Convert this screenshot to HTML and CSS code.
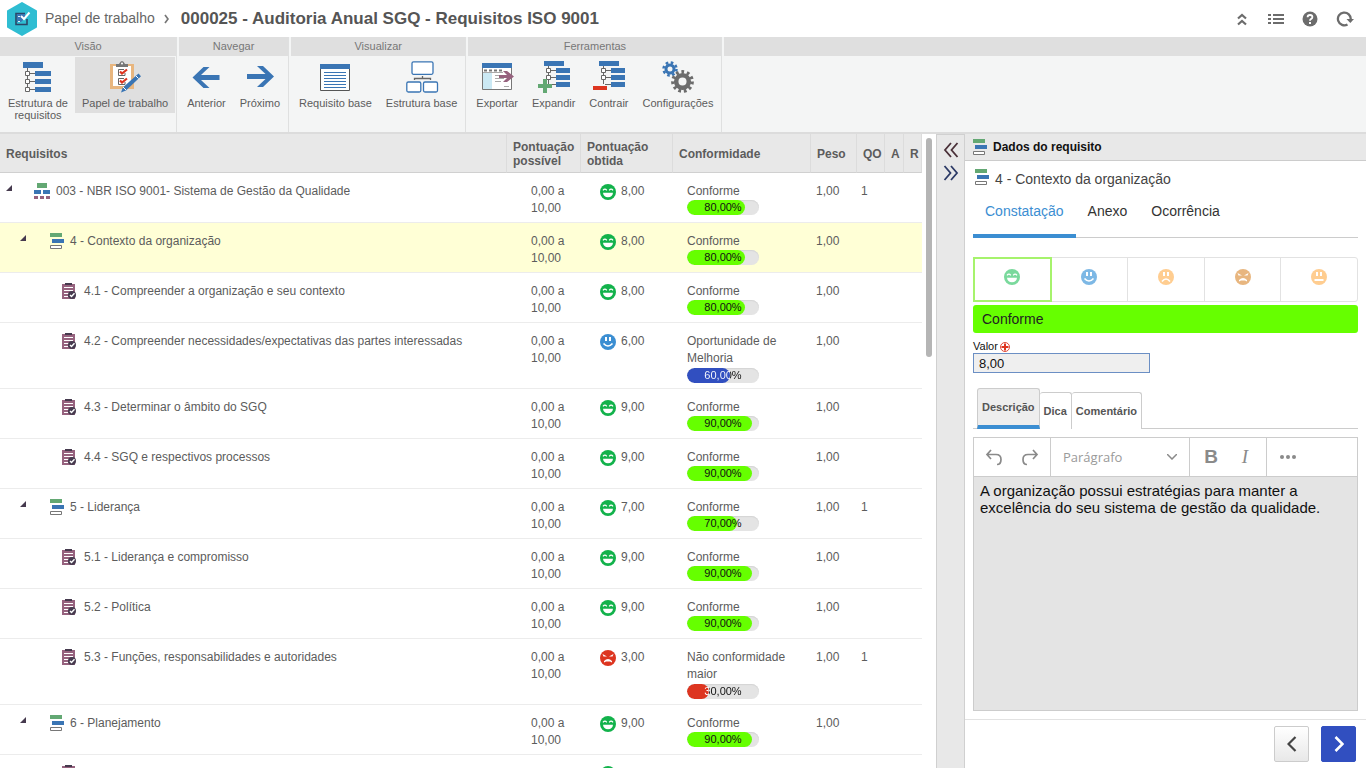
FILE: index.html
```html
<!DOCTYPE html>
<html lang="pt-BR">
<head>
<meta charset="utf-8">
<title>Papel de trabalho</title>
<link rel="stylesheet" href="styles.css">
</head>
<body>
<svg class="sprite" aria-hidden="true">
  <symbol id="happy" viewBox="0 0 16 16"><circle cx="8" cy="8" r="8" fill="currentColor"/><path d="M3 6.400q1.900-2.400 3.800 0M9.200 6.400q1.900-2.400 3.800 0" fill="none" stroke="#fff" stroke-width="1.300"/><path d="M3 8.800h10q-.5 4.400-5 4.400t-5-4.400z" fill="#fff"/></symbol>
  <symbol id="smile" viewBox="0 0 16 16"><circle cx="8" cy="8" r="8" fill="currentColor"/><path d="M6 3v4M10 3v4" stroke="#fff" stroke-width="2"/><path d="M3.500 9.500q4.500 5 9 0" fill="none" stroke="#fff" stroke-width="1.700"/></symbol>
  <symbol id="sad" viewBox="0 0 16 16"><circle cx="8" cy="8" r="8" fill="currentColor"/><path d="M6 3v4M10 3v4" stroke="#fff" stroke-width="2"/><path d="M4 12.500q4-5 8 0" fill="none" stroke="#fff" stroke-width="1.600"/></symbol>
  <symbol id="angry" viewBox="0 0 16 16"><circle cx="8" cy="8" r="8" fill="currentColor"/><path d="M2.500 4l4.500 2.500H3.500zM13.500 4L9 6.500h3.500z" fill="#fff"/><path d="M4 12.500V11q4-3.800 8 0v1.500l-2-1H6z" fill="#fff"/></symbol>
  <symbol id="neutral" viewBox="0 0 16 16"><circle cx="8" cy="8" r="8" fill="currentColor"/><path d="M6 3v4M10 3v4" stroke="#fff" stroke-width="2"/><path d="M3.500 10h9v2h-9z" fill="#fff"/></symbol>
  <symbol id="root" viewBox="0 0 16 16"><path d="M3 0h10v5H3z" fill="#63a873"/><path d="M0 7h7v4H0zM9 7h7v4H9z" fill="#3a75b4"/><path d="M0 13h4v3H0zM6 13h4v3H6zM12 13h4v3h-4z" fill="#96627e"/></symbol>
  <symbol id="section" viewBox="0 0 14 16"><path d="M0 0h12v4H0z" fill="#63a873"/><path d="M2 6h12v4H2z" fill="#3a75b4"/><path d="M.5 12.500h11v3H.5z" fill="#fff" stroke="#777"/></symbol>
  <symbol id="clip" viewBox="0 0 14 16"><path d="M0 1h13v15H0z" fill="#96627e"/><path d="M3 0h7v2H3z" fill="#463a4e"/><path d="M2 4.500h9M2 7.500h9M2 10.500h5M2 13.500h4" stroke="#fff"/><circle cx="10" cy="12" r="4" fill="#463a4e"/><path d="M8 12l1.500 1.500 3-3.200" fill="none" stroke="#fff" stroke-width="1.400"/></symbol>
  <symbol id="caret" viewBox="0 0 6 6"><path d="M6 0v6H0z" fill="#463a4e"/></symbol>
  <symbol id="branch" viewBox="0 0 32 32"><path d="M6 0h20v5H6z" fill="#3a75b4"/><path d="M10.500 5v18M13 9.500h5M13 16.500h5M12 23.500h6" stroke="#666" fill="none"/><path d="M18 7h14v5H18zM18 14h14v5H18zM18 21h14v5H18z" fill="#3a75b4"/><path d="M8.500 7.500h4v4h-4zM8.500 14.500h4v4h-4z" fill="#fff" stroke="#666"/></symbol>
</svg>

<header class="topbar">
  <svg class="logo" viewBox="0 0 30 34"><path d="M15 1l14 8v16l-14 8L1 25V9z" fill="#2fbdd2" stroke="#2fbdd2" stroke-width="2" stroke-linejoin="round"/><path d="M18 11.500H9v11h11V17" fill="none" stroke="#2b4668" stroke-width="1.600"/><path d="M10 12h8v4l-4 4h-4z" fill="#3a75b4"/><path d="M11 14.500h2M11 19.500h2" stroke="#dff6fa"/><path d="M14 14l3 3 5.500-6.500" fill="none" stroke="#fff" stroke-width="2"/></svg>
  <a class="crumb" href="#">Papel de trabalho</a>
  <svg class="chev" viewBox="0 0 5 10"><path d="M1 1l3 4-3 4" fill="none" stroke="#777" stroke-width="1.700"/></svg>
  <h1>000025 - Auditoria Anual SGQ - Requisitos ISO 9001</h1>
  <nav class="tools">
    <button aria-label="Recolher"><svg viewBox="0 0 16 16"><path d="M4 7.500L8 4l4 3.500M4 13.500L8 10l4 3.500" fill="none" stroke="#6c6c6c" stroke-width="2.200"/></svg></button>
    <button aria-label="Lista"><svg viewBox="0 0 16 16"><path d="M0 4h3M5 4h11M0 8h3M5 8h11M0 12h3M5 12h11" stroke="#6c6c6c" stroke-width="2"/></svg></button>
    <button aria-label="Ajuda"><svg viewBox="0 0 16 16"><circle cx="8" cy="8" r="7.500" fill="#6c6c6c"/><path d="M5.600 6.300q0-2.300 2.400-2.300t2.400 2.100q0 1.300-1.500 2-.9.400-.9 1.600" fill="none" stroke="#fff" stroke-width="1.800"/><path d="M7 11h2v2H7z" fill="#fff"/></svg></button>
    <button aria-label="Atualizar"><svg viewBox="0 0 18 16"><path d="M11.500 13.500a6.400 6.400 0 1 1 3.200-5" fill="none" stroke="#6c6c6c" stroke-width="2.300"/><path d="M10.500 8h7.500l-3.700 4z" fill="#6c6c6c"/></svg></button>
  </nav>
</header>

<div class="ribbon">
  <section class="group"><h2>Visão</h2><div class="items">
    <button class="item"><svg viewBox="0 0 32 32"><path d="M1 1h20v6H1z" fill="#3a75b4"/><path d="M5.500 7v20M8 12.500h5M8 20.500h5M8 28.500h5" stroke="#666" fill="none"/><path d="M13 10h16v5H13zM13 18h16v5H13zM13 26h16v5H13z" fill="#3a75b4"/><path d="M3.500 10.500h4v4h-4zM3.500 18.500h4v4h-4zM3.500 26.500h4v4h-4z" fill="#fff" stroke="#666"/></svg><span>Estrutura de<br>requisitos</span></button>
    <button class="item active"><svg viewBox="0 0 32 32"><path d="M1 3h24v25H1z" fill="#e8b67f"/><path d="M4 5h18v20H4z" fill="#fff"/><path d="M7 6V3h3q3-6 6 0h3v3z" fill="#777"/><circle cx="13" cy="2.500" r="1" fill="#fff"/><path d="M15 8.500H9.500v6H16V12M15 17.500H9.500v6H16V21" fill="none" stroke="#666"/><path d="M11 10.500l2 2 5-4M11 19.500l2 2 5-4" fill="none" stroke="#dd3520" stroke-width="2.200"/><path d="M29.500 12.500l2.500 2.700-15 14.300-5 2 1.800-5z" fill="#3a75b4"/><path d="M27 15l2.500 2.500M14 26l3 3" stroke="#fff"/></svg><span>Papel de trabalho</span></button>
  </div></section>
  <section class="group"><h2>Navegar</h2><div class="items">
    <button class="item"><svg viewBox="0 0 32 32"><path d="M2.500 16.500L13.500 6h6l-8.500 8h18.500v5H11l8.500 8h-6z" fill="#3a75b4"/></svg><span>Anterior</span></button>
    <button class="item"><svg viewBox="0 0 32 32"><path d="M30 15.500L19 5h-6l8.500 8H3v5h18.500L13 26h6z" fill="#3a75b4"/></svg><span>Próximo</span></button>
  </div></section>
  <section class="group"><h2>Visualizar</h2><div class="items">
    <button class="item"><svg viewBox="0 0 32 32"><path d="M1.500 3.500h29v26h-29z" fill="#fff" stroke="#555"/><path d="M1 3h30v5H1z" fill="#3a75b4"/><path d="M5 11.500h22M5 14.500h22M5 17.500h22M5 20.500h22M5 23.500h22M5 26.500h22" stroke="#3a75b4"/></svg><span>Requisito base</span></button>
    <button class="item"><svg viewBox="0 0 32 32"><path d="M8.500 19v-1.500h16V19M16.500 15v3" fill="none" stroke="#666" stroke-width="1.300"/><g fill="#fff" stroke="#3a75b4" stroke-width="1.300"><rect x="6" y=".8" width="21" height="12.500" rx="1.500"/><rect x=".8" y="21" width="14" height="10" rx="1.500"/><rect x="17.500" y="21" width="14" height="10" rx="1.500"/></g></svg><span>Estrutura base</span></button>
  </div></section>
  <section class="group"><h2>Ferramentas</h2><div class="items">
    <button class="item"><svg viewBox="0 0 32 32"><path d="M1.500 2.500h29v26h-29z" fill="#fff" stroke="#777"/><path d="M1 2h30v5H1z" fill="#3a75b4"/><path d="M3 9.500h18" stroke="#777" stroke-width="2" stroke-dasharray="3 2"/><path d="M2 12h9v16H2z" fill="#cbe9f4"/><path d="M2 11.500h20M14 14.500h4M14 17.500h9M14 20.500h6M23 25.500h5" stroke="#aaa"/><path d="M18 14h8l-4-4h4l7 5.500-7 5.500h-4l4-4h-8z" fill="#96627e"/></svg><span>Exportar</span></button>
    <button class="item"><svg viewBox="0 0 32 32"><use href="#branch" width="32" height="32"/><path d="M5 18h4v5h5v4H9v5H5v-5H0v-4h5z" fill="#63a873"/></svg><span>Expandir</span></button>
    <button class="item"><svg viewBox="0 0 32 32"><use href="#branch" width="32" height="32"/><path d="M0 25h14v4H0z" fill="#dd3520"/></svg><span>Contrair</span></button>
    <button class="item"><svg viewBox="0 0 32 32"><circle cx="8" cy="8" r="4" fill="none" stroke="#3a75b4" stroke-width="3"/><circle cx="8" cy="8" r="6.500" fill="none" stroke="#3a75b4" stroke-width="2.500" stroke-dasharray="2.600 2.500"/><circle cx="20.500" cy="20.500" r="6.300" fill="none" stroke="#6c6c6c" stroke-width="4.500"/><circle cx="20.500" cy="20.500" r="9.600" fill="none" stroke="#6c6c6c" stroke-width="3.600" stroke-dasharray="2.700 2.780"/></svg><span>Configurações</span></button>
  </div></section>
  <section class="group rest"><h2></h2></section>
</div>

<main class="work">
  <div class="grid">
    <table>
      <colgroup><col><col class="w-possible"><col class="w-score"><col class="w-conf"><col class="w-weight"><col class="w-qo"><col class="w-flag"><col class="w-last"></colgroup>
      <thead><tr><th>Requisitos</th><th>Pontuação possível</th><th>Pontuação obtida</th><th>Conformidade</th><th>Peso</th><th>QO</th><th>A</th><th>R</th></tr></thead>
      <tbody>
        <tr><td><div class="node l0"><svg class="caret"><use href="#caret"/></svg><svg class="i16"><use href="#root"/></svg>003 - NBR ISO 9001- Sistema de Gestão da Qualidade</div></td><td>0,00 a<br>10,00</td><td><div class="score good"><svg><use href="#happy"/></svg>8,00</div></td><td>Conforme<div class="meter green" style="--value:80%"><span>80,00%</span></div></td><td>1,00</td><td>1</td><td></td><td></td></tr>
        <tr class="selected"><td><div class="node l1"><svg class="caret"><use href="#caret"/></svg><svg class="i14"><use href="#section"/></svg>4 - Contexto da organização</div></td><td>0,00 a<br>10,00</td><td><div class="score good"><svg><use href="#happy"/></svg>8,00</div></td><td>Conforme<div class="meter green" style="--value:80%"><span>80,00%</span></div></td><td>1,00</td><td></td><td></td><td></td></tr>
        <tr><td><div class="node l2"><svg class="i14"><use href="#clip"/></svg>4.1 - Compreender a organização e seu contexto</div></td><td>0,00 a<br>10,00</td><td><div class="score good"><svg><use href="#happy"/></svg>8,00</div></td><td>Conforme<div class="meter green" style="--value:80%"><span>80,00%</span></div></td><td>1,00</td><td></td><td></td><td></td></tr>
        <tr class="long"><td><div class="node l2"><svg class="i14"><use href="#clip"/></svg>4.2 - Compreender necessidades/expectativas das partes interessadas</div></td><td>0,00 a<br>10,00</td><td><div class="score fair"><svg><use href="#smile"/></svg>6,00</div></td><td>Oportunidade de Melhoria<div class="meter blue" style="--value:60%"><span>60,00%</span></div></td><td>1,00</td><td></td><td></td><td></td></tr>
        <tr><td><div class="node l2"><svg class="i14"><use href="#clip"/></svg>4.3 - Determinar o âmbito do SGQ</div></td><td>0,00 a<br>10,00</td><td><div class="score good"><svg><use href="#happy"/></svg>9,00</div></td><td>Conforme<div class="meter green" style="--value:90%"><span>90,00%</span></div></td><td>1,00</td><td></td><td></td><td></td></tr>
        <tr><td><div class="node l2"><svg class="i14"><use href="#clip"/></svg>4.4 - SGQ e respectivos processos</div></td><td>0,00 a<br>10,00</td><td><div class="score good"><svg><use href="#happy"/></svg>9,00</div></td><td>Conforme<div class="meter green" style="--value:90%"><span>90,00%</span></div></td><td>1,00</td><td></td><td></td><td></td></tr>
        <tr><td><div class="node l1"><svg class="caret"><use href="#caret"/></svg><svg class="i14"><use href="#section"/></svg>5 - Liderança</div></td><td>0,00 a<br>10,00</td><td><div class="score good"><svg><use href="#happy"/></svg>7,00</div></td><td>Conforme<div class="meter green" style="--value:70%"><span>70,00%</span></div></td><td>1,00</td><td>1</td><td></td><td></td></tr>
        <tr><td><div class="node l2"><svg class="i14"><use href="#clip"/></svg>5.1 - Liderança e compromisso</div></td><td>0,00 a<br>10,00</td><td><div class="score good"><svg><use href="#happy"/></svg>9,00</div></td><td>Conforme<div class="meter green" style="--value:90%"><span>90,00%</span></div></td><td>1,00</td><td></td><td></td><td></td></tr>
        <tr><td><div class="node l2"><svg class="i14"><use href="#clip"/></svg>5.2 - Política</div></td><td>0,00 a<br>10,00</td><td><div class="score good"><svg><use href="#happy"/></svg>9,00</div></td><td>Conforme<div class="meter green" style="--value:90%"><span>90,00%</span></div></td><td>1,00</td><td></td><td></td><td></td></tr>
        <tr class="long"><td><div class="node l2"><svg class="i14"><use href="#clip"/></svg>5.3 - Funções, responsabilidades e autoridades</div></td><td>0,00 a<br>10,00</td><td><div class="score bad"><svg><use href="#angry"/></svg>3,00</div></td><td>Não conformidade maior<div class="meter red" style="--value:30%"><span>30,00%</span></div></td><td>1,00</td><td>1</td><td></td><td></td></tr>
        <tr><td><div class="node l1"><svg class="caret"><use href="#caret"/></svg><svg class="i14"><use href="#section"/></svg>6 - Planejamento</div></td><td>0,00 a<br>10,00</td><td><div class="score good"><svg><use href="#happy"/></svg>9,00</div></td><td>Conforme<div class="meter green" style="--value:90%"><span>90,00%</span></div></td><td>1,00</td><td></td><td></td><td></td></tr>
        <tr><td><div class="node l2"><svg class="i14"><use href="#clip"/></svg></div></td><td></td><td><div class="score good"><svg><use href="#happy"/></svg></div></td><td></td><td></td><td></td><td></td><td></td></tr>
      </tbody>
    </table>
  </div>
  <div class="gutter"><div class="thumb"></div></div>
  <div class="splitter">
    <button aria-label="Expandir painel"><svg viewBox="0 0 16 16"><path d="M8 1L2 8l6 7M14.500 1l-6 7 6 7" fill="none" stroke="#4a3038" stroke-width="1.800"/></svg></button>
    <button aria-label="Recolher painel"><svg viewBox="0 0 16 16"><path d="M1.500 1l6 7-6 7M8 1l6 7-6 7" fill="none" stroke="#2c3a66" stroke-width="1.800"/></svg></button>
  </div>
  <aside class="panel">
    <h2 class="panel-head"><svg class="i14"><use href="#section"/></svg>Dados do requisito</h2>
    <div class="panel-body">
      <h3><svg class="i14"><use href="#section"/></svg>4 - Contexto da organização</h3>
      <nav class="tabs"><button class="on">Constatação</button><button>Anexo</button><button>Ocorrência</button></nav>
      <div class="faces">
        <button class="on f1" aria-label="Conforme"><svg><use href="#happy"/></svg></button>
        <button class="f2" aria-label="Oportunidade de melhoria"><svg><use href="#smile"/></svg></button>
        <button class="f3" aria-label="Não conformidade menor"><svg><use href="#sad"/></svg></button>
        <button class="f4" aria-label="Não conformidade maior"><svg><use href="#angry"/></svg></button>
        <button class="f3" aria-label="Não aplicável"><svg><use href="#neutral"/></svg></button>
      </div>
      <div class="status">Conforme</div>
      <label for="valor">Valor <svg viewBox="0 0 10 10"><circle cx="5" cy="5" r="4.500" fill="#fff" stroke="#dd3520" stroke-width=".9"/><path d="M5 1.500v7M1.500 5h7" stroke="#dd3520" stroke-width="2"/></svg></label>
      <input id="valor" type="text" value="8,00">
      <nav class="subtabs"><button class="on">Descrição</button><button>Dica</button><button>Comentário</button></nav>
      <div class="editor">
        <div class="toolbar">
          <div><button aria-label="Desfazer"><svg viewBox="0 0 18 18"><path d="M6 2L2 6.500 6 11M2 6.500h9q5 0 5 5T12 16.500" fill="none" stroke="#8a8a8a" stroke-width="1.700"/></svg></button><button aria-label="Refazer"><svg viewBox="0 0 18 18"><path d="M12 2l4 4.500-4 4.500M16 6.500H7q-5 0-5 5t4 5" fill="none" stroke="#8a8a8a" stroke-width="1.700"/></svg></button></div>
          <div class="format"><button>Parágrafo<svg viewBox="0 0 10 6"><path d="M0 0l5 5 5-5" fill="none" stroke="#8a8a8a" stroke-width="1.500"/></svg></button></div>
          <div><button class="b" aria-label="Negrito">B</button><button class="i" aria-label="Itálico">I</button></div>
          <div><button aria-label="Mais"><svg viewBox="0 0 18 18"><g fill="#8a8a8a"><circle cx="3" cy="9" r="2"/><circle cx="9" cy="9" r="2"/><circle cx="15" cy="9" r="2"/></g></svg></button></div>
        </div>
        <textarea aria-label="Descrição">A organização possui estratégias para manter a excelência do seu sistema de gestão da qualidade.</textarea>
      </div>
    </div>
    <footer>
      <button aria-label="Requisito anterior"><svg viewBox="0 0 10 16"><path d="M8.500 1l-7 7 7 7" fill="none" stroke="#444" stroke-width="2.200"/></svg></button>
      <button class="primary" aria-label="Próximo requisito"><svg viewBox="0 0 10 16"><path d="M1.500 1l7 7-7 7" fill="none" stroke="#fff" stroke-width="2.600"/></svg></button>
    </footer>
  </aside>
</main>
</body>
</html>
```
FILE: styles.css
```css
* { box-sizing: border-box; }
body { margin: 0; height: 100vh; display: flex; flex-direction: column; overflow: hidden; background: #fff; color: #5c5c5c; font: 12px/17px "Liberation Sans", Arial, sans-serif; }
button { margin: 0; padding: 0; border: 0; background: none; color: inherit; font: inherit; cursor: pointer; }
svg { display: block; flex: none; }
h1, h2, h3 { margin: 0; }
.sprite { display: none; }

.topbar { display: flex; align-items: center; height: 37px; flex: none; padding: 0 12px 0 7px; }
.logo { width: 30px; height: 34px; }
.crumb { margin-left: 8px; color: #666; font-size: 14px; text-decoration: none; }
.chev { width: 5px; height: 10px; margin: 0 12px 0 9px; }
.topbar h1 { color: #555; font-size: 17px; line-height: 20px; }
.tools { display: flex; gap: 18px; margin-left: auto; }
.tools svg { width: 16px; height: 16px; }
.tools button:last-child svg { width: 18px; }

.ribbon { display: flex; gap: 2px; height: 97px; flex: none; background: #f4f5f5; border-bottom: 2px solid #dcdcdc; }
.group { border-right: 1px solid #dfe0e0; }
.group.rest { flex: 1; border: 0; }
.group h2 { height: 19px; background: #dfdfdf; color: #777; font-size: 11px; font-weight: 400; line-height: 18px; text-align: center; }
.items { display: flex; align-items: flex-start; padding: 1px 1px 0 1px; }
.item { display: flex; flex-direction: column; align-items: center; gap: 4px; padding: 4px 7px; font-size: 11px; line-height: 12px; white-space: nowrap; }
.item svg { width: 32px; height: 32px; overflow: visible; }
.item.active { background: #dfdfdf; }

.work { flex: 1; min-height: 0; display: flex; }
.grid { flex: 1; min-width: 0; overflow: hidden; }
table { width: 100%; table-layout: fixed; border-collapse: separate; border-spacing: 0; }
.w-possible { width: 74px; }
.w-score { width: 92px; }
.w-conf { width: 138px; }
.w-weight { width: 46px; }
.w-qo { width: 28px; }
.w-flag { width: 19px; }
.w-last { width: 18px; }
th { height: 39px; padding: 2px 6px 0; background: #e8e8e8; border-right: 1px solid #dcdcdc; border-bottom: 1px solid #d0d0d0; color: #5c5c5c; line-height: 14px; text-align: left; vertical-align: middle; }
th:nth-child(n+6) { padding-right: 0; }
td { height: 50px; padding: 10px 0 4px; border-bottom: 1px solid #ececec; vertical-align: top; }
td:nth-child(2) { padding-left: 24px; }
td:nth-child(3) { padding-left: 19px; }
td:nth-child(4) { padding-left: 14px; }
td:nth-child(5) { padding-left: 5px; }
td:nth-child(6) { padding-left: 4px; }
.selected td { background: #ffffd6; }
.long td { height: 66px; }
.node { display: flex; }
.caret { width: 6px; height: 6px; margin-top: 2px; }
.i16 { width: 16px; height: 16px; }
.i14 { width: 14px; height: 16px; }
.l0 { padding-left: 6px; }
.l0 .i16 { margin: 0 6px 0 22px; }
.l1 { padding-left: 20px; }
.l1 .i14 { margin: 0 6px 0 24px; }
.l2 { padding-left: 62px; }
.l2 .i14 { margin-right: 8px; }
.score { display: flex; gap: 5px; }
.score svg { width: 16px; height: 16px; margin-top: 1px; }
.good svg { color: #12b24b; }
.fair svg { color: #3b8ed2; }
.bad svg { color: #dd3520; }
.meter { width: 72px; height: 15px; border-radius: 8px; background: #e4e4e4; display: grid; overflow: hidden; font-size: 11px; line-height: 15px; text-align: center; box-shadow: inset 0 1px 1px #d4d4d4; }
.meter::before { content: ""; grid-area: 1 / 1; width: var(--value); border-radius: 8px; background: var(--fill); }
.meter span { grid-area: 1 / 1; color: #111; }
.green { --fill: #66ff00; }
.blue { --fill: #314fc0; }
.red { --fill: #dd3520; }
.blue span, .red span { color: transparent; background: linear-gradient(90deg, #fff var(--value), #111 var(--value)); background-clip: text; -webkit-background-clip: text; }
.long .meter { margin-top: 1px; }

.gutter { width: 14px; padding: 4px; }
.thumb { width: 6px; height: 35%; border-radius: 3px; background: #b5b5b5; }
.splitter { width: 29px; padding-top: 7px; display: flex; flex-direction: column; align-items: center; gap: 7px; background: #e8e8e8; border: solid #d0d0d0; border-width: 1px 1px 0; }
.splitter svg { width: 16px; height: 16px; }

.panel { width: 401px; display: flex; flex-direction: column; }
.panel-head { display: flex; align-items: center; gap: 6px; height: 27px; padding-left: 8px; background: #e8e8e8; border-bottom: 1px solid #ccc; color: #111; font-size: 12px; }
.panel-body { flex: 1; min-height: 0; display: flex; flex-direction: column; padding: 8px; }
.panel-body h3 { display: flex; gap: 6px; padding-left: 2px; color: #444; font-size: 14px; font-weight: 400; line-height: 20px; }
.tabs { display: flex; height: 41px; margin-top: 8px; border-bottom: 1px solid #ccc; color: #333; font-size: 14px; }
.tabs button { height: 41px; padding: 0 12px 12px; }
.tabs .on { border-bottom: 4px solid #3b8ed2; padding-bottom: 8px; color: #3b8ed2; }
.faces { display: grid; grid-template-columns: repeat(5, 1fr); height: 45px; margin-top: 19px; border: 1px solid #e2e2e2; border-radius: 3px; }
.faces button { display: grid; place-items: center; padding-bottom: 5px; border-left: 1px solid #e2e2e2; }
.faces .on { border: 1px solid #a6f36c; outline: 1px solid #a6f36c; }
.faces .f2 { border-left: 0; }
.faces svg { width: 16px; height: 16px; }
.f1 { color: #7ad99c; }
.f2 { color: #7db8e5; }
.f3 { color: #ffcd90; }
.f4 { color: #e8b67f; }
.status { height: 28px; margin-top: 3px; padding-left: 9px; border-radius: 3px; background: #66ff00; color: #222; font-size: 14px; line-height: 28px; }
label { display: flex; align-items: center; gap: 2px; margin-top: 7px; color: #111; font-size: 11px; line-height: 13px; }
label svg { width: 10px; height: 10px; }
input { width: 177px; height: 20px; padding: 0 5px; border: 1px solid #6b8fc4; background: #efefef; color: #111; font: 13px/18px "Liberation Sans", Arial, sans-serif; }
.subtabs { display: flex; align-items: flex-end; margin-top: 15px; padding-left: 4px; border-bottom: 1px solid #ccc; font-size: 11px; font-weight: 700; color: #555; }
.subtabs button { height: 37px; margin-bottom: -1px; padding: 0 4px; border: 1px solid #ccc; border-bottom: 0; border-left: 0; border-radius: 3px 3px 0 0; background: #fff; }
.subtabs .on { height: 41px; border-left: 1px solid #ccc; border-bottom: 4px solid #3b8ed2; background: #eee; }
.editor { flex: 1; min-height: 0; display: flex; flex-direction: column; margin-top: 8px; border: 1px solid #ccc; }
.toolbar { display: flex; height: 39px; flex: none; border-bottom: 1px solid #ccc; color: #8a8a8a; }
.toolbar div { display: flex; align-items: center; gap: 18px; padding: 0 11px; border-right: 1px solid #ccc; }
.toolbar div:last-child { border: 0; padding-left: 12px; }
.toolbar svg { width: 18px; height: 18px; }
.toolbar .format { width: 139px; padding: 0 12px; }
.format button { flex: 1; display: flex; align-items: center; justify-content: space-between; color: #9a9a9a; font: 13px/18px "Open Sans", sans-serif; }
.toolbar .format svg { width: 10px; height: 6px; }
.toolbar .b, .toolbar .i { width: 18px; font-size: 19px; line-height: 20px; font-weight: 700; }
.toolbar .i { font-family: "Liberation Serif", serif; font-style: italic; font-weight: 400; }
.toolbar div:nth-child(3) { gap: 16px; padding: 0 12px; }
textarea { flex: 1; padding: 5px 6px; border: 0; resize: none; background: #e4e4e4; color: #111; font: 15px/17px "Liberation Sans", Arial, sans-serif; }
footer { display: flex; justify-content: flex-end; gap: 12px; padding: 6px 10px; border-top: 1px solid #e2e2e2; }
footer button { display: grid; place-items: center; width: 35px; height: 36px; border: 1px solid #ccc; border-radius: 2px; background: linear-gradient(#fff, #e8e8e8); }
footer .primary { border-color: #314fc0; background: #314fc0; }
footer svg { width: 10px; height: 16px; }
```
